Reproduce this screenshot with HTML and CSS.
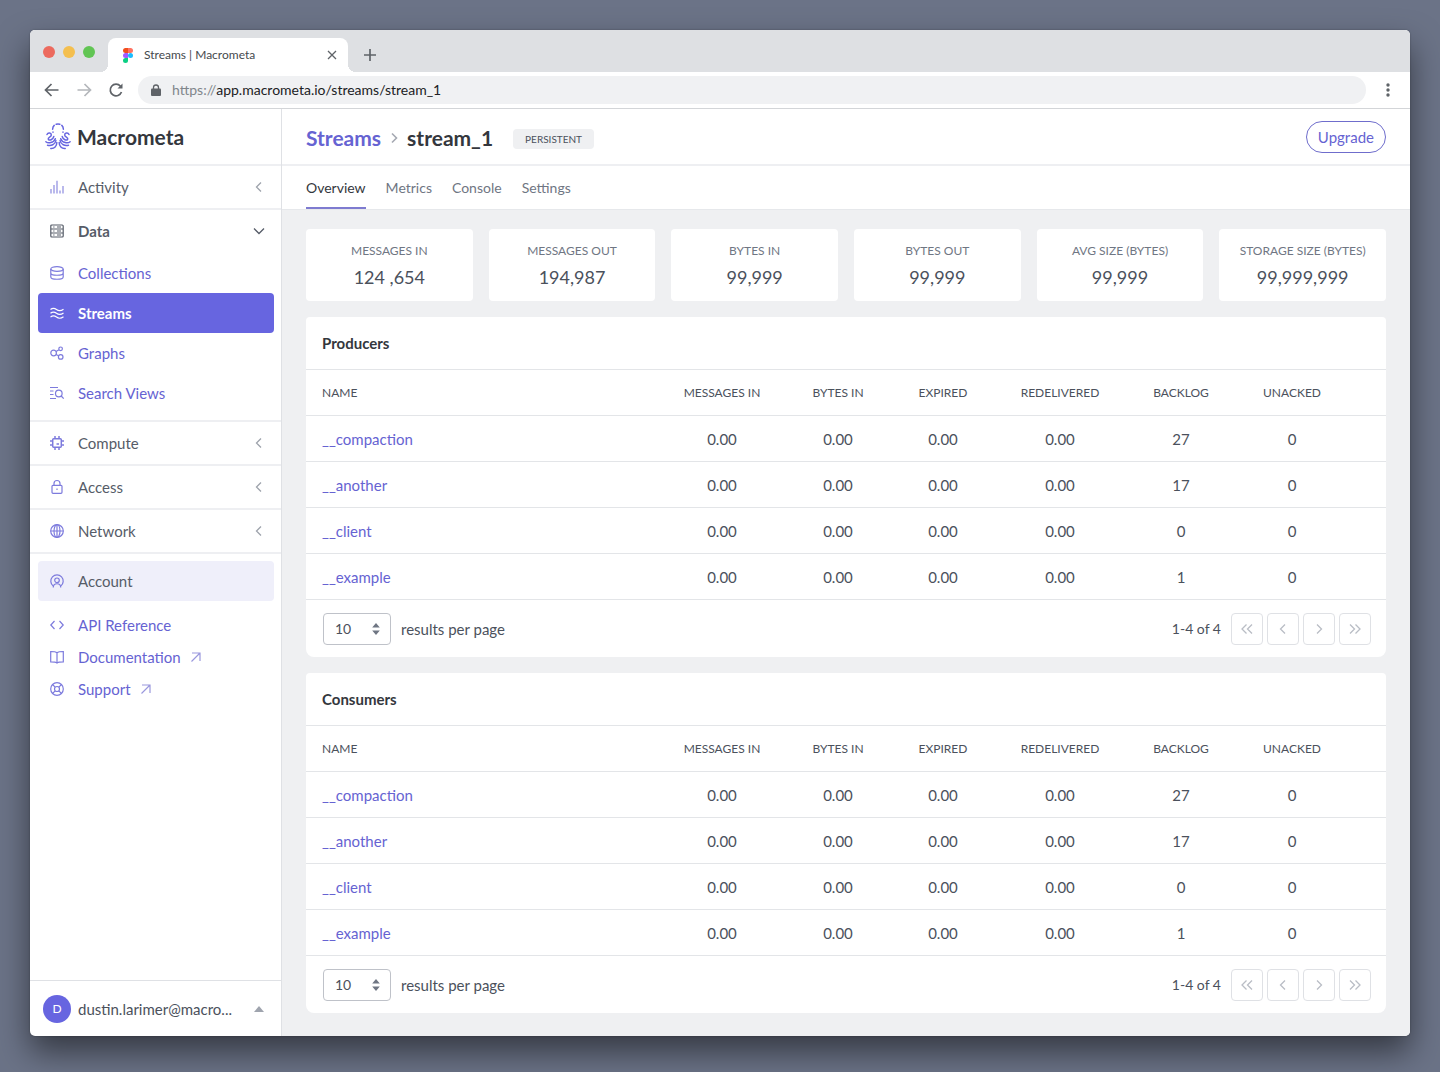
FILE: index.html
```html
<!DOCTYPE html>
<html lang="en">
<head>
    <meta charset="UTF-8">
    <meta name="viewport" content="width=device-width, initial-scale=1.0">
    <title>Streams | Macrometa</title>
    <link rel="stylesheet" href="styles.css">
</head>
<body>
    <!-- Shared icons -->
    <svg class="sprite" aria-hidden="true">
        <symbol id="chev-left" viewBox="0 0 14 14"><path d="M9 2.5 4.5 7 9 11.5"/></symbol>
        <symbol id="chev-right" viewBox="0 0 14 14"><path d="M5 2.5 9.5 7 5 11.5"/></symbol>
        <symbol id="chev-first" viewBox="0 0 14 14"><path d="M6.5 2.5 2 7l4.5 4.5M12 2.5 7.5 7l4.5 4.5"/></symbol>
        <symbol id="chev-last" viewBox="0 0 14 14"><path d="M2 2.5 6.5 7 2 11.5M7.5 2.5 12 7l-4.5 4.5"/></symbol>
        <symbol id="external" viewBox="0 0 14 14"><path d="M3 3h8v8M11 3l-8.500 8.500"/></symbol>
        <symbol id="updown" viewBox="0 0 8 14"><path d="M4 1 7.800 5.500H.2zM4 13 .2 8.500h7.600z"/></symbol>
    </svg>

    <div class="window">
        <div class="tab-bar">
            <div class="lights">
                <span class="light red"></span>
                <span class="light yellow"></span>
                <span class="light green"></span>
            </div>
            <div class="browser-tab">
                <svg class="favicon" viewBox="0 0 10 15">
                    <path fill="#f24e1e" d="M2.5 0H5v5H2.500a2.500 2.500 0 0 1 0-5z"/>
                    <path fill="#ff7262" d="M5 0h2.500a2.500 2.500 0 0 1 0 5H5z"/>
                    <path fill="#a259ff" d="M2.500 5H5v5H2.500a2.500 2.500 0 0 1 0-5z"/>
                    <circle fill="#1abcfe" cx="7.5" cy="7.5" r="2.5"/>
                    <path fill="#0acf83" d="M2.500 10H5v2.500A2.500 2.500 0 1 1 2.500 10z"/>
                </svg>
                <span class="tab-title">Streams | Macrometa</span>
                <button class="plain" aria-label="Close tab">
                    <svg class="line" width="10" height="10" viewBox="0 0 10 10"><path d="m1 1 8 8M9 1 1 9"/></svg>
                </button>
            </div>
            <button class="plain new-tab" aria-label="New tab">
                <svg class="line thick" width="12" height="12" viewBox="0 0 12 12"><path d="M6 0v12M0 6h12"/></svg>
            </button>
        </div>

        <div class="toolbar">
            <button class="plain" aria-label="Back">
                <svg class="line thick" width="16" height="16" viewBox="0 0 16 16"><path d="M14.5 8h-13M7.500 2l-6 6 6 6"/></svg>
            </button>
            <button class="plain faded" aria-label="Forward">
                <svg class="line thick" width="16" height="16" viewBox="0 0 16 16"><path d="M1.500 8h13M8.500 2l6 6-6 6"/></svg>
            </button>
            <button class="plain" aria-label="Reload">
                <svg class="line thick" width="16" height="16" viewBox="0 0 16 16"><path d="M13.500 10A5.800 5.800 0 1 1 12.500 4.300"/><path class="solid" d="M14.500 1.500v5h-5z"/></svg>
            </button>
            <div class="address">
                <svg width="10" height="13" viewBox="0 0 10 13"><path fill="#5f6368" d="M1 4.500h8q1 0 1 1V11q0 1-1 1H1q-1 0-1-1V5.500q0-1 1-1z"/><path fill="none" stroke="#5f6368" stroke-width="1.3" d="M2.500 5V3.500a2.500 2.500 0 0 1 5 0V5"/></svg>
                <label class="url"><span>https://</span><input type="text" value="app.macrometa.io/streams/stream_1" aria-label="Address"></label>
            </div>
            <button class="plain more" aria-label="Browser menu">
                <svg width="4" height="14" viewBox="0 0 4 14" fill="#5f6368"><circle cx="2" cy="2" r="1.7"/><circle cx="2" cy="7" r="1.7"/><circle cx="2" cy="12" r="1.7"/></svg>
            </button>
        </div>

        <div class="app">
            <aside class="sidebar">
                <a href="#" class="logo">
                    <svg width="26" height="27" viewBox="0 0 26 27">
                        <path d="M7.600 6.300Q7.800 3.600 9.200 2.400M11.200 1.200Q13 .7 14.800 1.200M16.800 2.400q1.400 1.200 1.600 3.900"/>
                        <path d="M8 9v.2M18 9v.2"/>
                        <path d="M2 11.500C3 9.300 6.300 9.800 6.300 12S2.500 14.200 3.300 16.200 8 16.600 8.800 13.500"/>
                        <path d="M24 11.500C23 9.300 19.700 9.800 19.700 12s3.800 2.200 3 4.200-4.700.4-5.500-2.700"/>
                        <path d="M.9 18.700c2 1.800 7.800 1.500 9.400-3M25.100 18.700c-2 1.800-7.800 1.500-9.400-3"/>
                        <path d="M2.500 22.200c3.500.9 7.700-.5 8.400-4.700M23.500 22.200c-3.500.9-7.700-.5-8.400-4.700"/>
                        <path d="M5.800 25.500c3.600.3 6-2.200 6-6M20.200 25.500c-3.600.3-6-2.200-6-6"/>
                    </svg>
                    <span>Macrometa</span>
                </a>

                <nav>
                    <a href="#" class="nav-section">
                        <svg class="icon light-icon" viewBox="0 0 14 14"><path d="M1 9v4.500M4 5v8.500M7 .8v12.700M10 10.500v3M13 6v7.500"/></svg>
                        <span>Activity</span>
                        <svg class="chev"><use href="#chev-left"/></svg>
                    </a>
                    <div class="nav-group">
                        <a href="#" class="nav-section open">
                            <svg class="icon" viewBox="0 0 14 14"><rect x=".8" y="1" width="12.4" height="12" rx="1"/><path d="M1 5h12M1 9h12M3.200 3h1.300M7 3h4M3.200 7h1.300M7 7h4M3.200 11h1.300M7 11h4"/></svg>
                            <span>Data</span>
                            <svg class="chev" viewBox="0 0 14 14"><path d="M2 4.500 7 9.500l5-5"/></svg>
                        </a>
                        <a href="#" class="nav-item">
                            <svg class="icon" viewBox="0 0 14 14"><ellipse cx="7" cy="3" rx="6.2" ry="2.3"/><path d="M.8 3v8c0 3 12.400 3 12.400 0V3M.8 7c0 3 12.400 3 12.400 0"/></svg>
                            <span>Collections</span>
                        </a>
                        <a href="#" class="nav-item active">
                            <svg class="icon" viewBox="0 0 14 14"><path d="M.5 3.500c2.500-2 4-1.500 6 0s4.500 1.500 7-.3M.5 7.300c2.500-2 4-1.500 6 0s4.500 1.500 7-.3M.5 11.100c2.500-2 4-1.500 6 0s4.500 1.500 7-.3"/></svg>
                            <span>Streams</span>
                        </a>
                        <a href="#" class="nav-item">
                            <svg class="icon" viewBox="0 0 14 14"><circle cx="3.6" cy="7" r="2.8"/><circle cx="10.6" cy="2.8" r="1.8"/><circle cx="10.7" cy="10.9" r="2.3"/><path d="M6 5.500 9 3.700M6 8.400l2.500 1.400"/></svg>
                            <span>Graphs</span>
                        </a>
                        <a href="#" class="nav-item">
                            <svg class="icon" viewBox="0 0 14 14"><path d="M0 1.500h8M0 5h3.500M0 8.500h3.500M0 12.500h6"/><circle cx="8.8" cy="7.5" r="3.3"/><path d="m11.200 10 2.500 2.700"/></svg>
                            <span>Search Views</span>
                        </a>
                    </div>
                    <a href="#" class="nav-section">
                        <svg class="icon" viewBox="0 0 14 14"><rect x="2.7" y="2.7" width="8.6" height="8.6" rx="1" stroke-width="1.5"/><path stroke-width="1.5" d="M5 0v2.500M9 0v2.500M5 11.500V14M9 11.500V14M0 5h2.500M0 9h2.500M11.500 5H14M11.500 9H14M6.500 8H9"/></svg>
                        <span>Compute</span>
                        <svg class="chev"><use href="#chev-left"/></svg>
                    </a>
                    <a href="#" class="nav-section">
                        <svg class="icon" viewBox="0 0 14 14"><rect x="2" y="5.3" width="10" height="8" rx="1"/><path d="M4 5V3.500a3 3 0 0 1 6 0V5M7 8.600v1.400"/></svg>
                        <span>Access</span>
                        <svg class="chev"><use href="#chev-left"/></svg>
                    </a>
                    <a href="#" class="nav-section">
                        <svg class="icon" viewBox="0 0 14 14"><circle cx="7" cy="7" r="6.3"/><ellipse cx="7" cy="7" rx="3" ry="6.3"/><path d="M.7 7h12.600M7 .7v12.600"/></svg>
                        <span>Network</span>
                        <svg class="chev"><use href="#chev-left"/></svg>
                    </a>
                </nav>

                <a href="#" class="nav-item account">
                    <svg class="icon" viewBox="0 0 14 14"><path d="M3.200 12A6.200 6.200 0 1 1 10.800 12"/><circle cx="7" cy="6.3" r="2.3"/><path d="M3.300 13.500c0-5 7.400-5 7.400 0"/></svg>
                    <span>Account</span>
                </a>

                <div class="help-links">
                    <a href="#">
                        <svg class="icon" viewBox="0 0 14 14"><path d="M4.500 3 .8 7l3.700 4M9.500 3l3.700 4-3.700 4"/></svg>
                        <span>API Reference</span>
                    </a>
                    <a href="#">
                        <svg class="icon" viewBox="0 0 14 14"><path d="M7 2.800Q5.500 1.500.7 1.500v10.300q5 0 6.300 1.200 1.300-1.200 6.300-1.200V1.500Q8.500 1.500 7 2.800zM7 2.800V13"/></svg>
                        <span>Documentation</span>
                        <svg class="external"><use href="#external"/></svg>
                    </a>
                    <a href="#">
                        <svg class="icon" viewBox="0 0 14 14"><circle cx="7" cy="7" r="6.3"/><circle cx="7" cy="7" r="2.5"/><path d="m2.500 2.500 2.700 2.700M11.500 2.500 8.800 5.200M2.500 11.500l2.700-2.700M11.500 11.500 8.800 8.800"/></svg>
                        <span>Support</span>
                        <svg class="external"><use href="#external"/></svg>
                    </a>
                </div>

                <button class="user">
                    <span class="avatar">D</span>
                    <span class="email">dustin.larimer@macro...</span>
                    <svg width="10" height="6" viewBox="0 0 10 6"><path fill="#9fa4ae" d="m5 0 5 6H0z"/></svg>
                </button>
            </aside>

            <main>
                <header class="page-header">
                    <h1>
                        <a href="#">Streams</a>
                        <svg class="crumb"><use href="#chev-right"/></svg>
                        <span>stream_1</span>
                    </h1>
                    <span class="badge">PERSISTENT</span>
                    <button class="upgrade">Upgrade</button>
                </header>

                <nav class="tabs">
                    <a href="#" class="current">Overview</a>
                    <a href="#">Metrics</a>
                    <a href="#">Console</a>
                    <a href="#">Settings</a>
                </nav>

                <div class="content">
                    <div class="stats">
                        <div class="stat"><h3>MESSAGES IN</h3><p>124 ,654</p></div>
                        <div class="stat"><h3>MESSAGES OUT</h3><p>194,987</p></div>
                        <div class="stat"><h3>BYTES IN</h3><p>99,999</p></div>
                        <div class="stat"><h3>BYTES OUT</h3><p>99,999</p></div>
                        <div class="stat"><h3>AVG SIZE (BYTES)</h3><p>99,999</p></div>
                        <div class="stat"><h3>STORAGE SIZE (BYTES)</h3><p>99,999,999</p></div>
                    </div>

                    <!-- Producers -->
                    <section class="panel">
                        <h2>Producers</h2>
                        <table>
                            <thead>
                                <tr><th class="name">NAME</th><th class="wide">MESSAGES IN</th><th class="wide">BYTES IN</th><th class="narrow">EXPIRED</th><th class="widest">REDELIVERED</th><th class="medium">BACKLOG</th><th class="last">UNACKED</th></tr>
                            </thead>
                            <tbody>
                                <tr><td><a href="#">__compaction</a></td><td>0.00</td><td>0.00</td><td>0.00</td><td>0.00</td><td>27</td><td>0</td></tr>
                                <tr><td><a href="#">__another</a></td><td>0.00</td><td>0.00</td><td>0.00</td><td>0.00</td><td>17</td><td>0</td></tr>
                                <tr><td><a href="#">__client</a></td><td>0.00</td><td>0.00</td><td>0.00</td><td>0.00</td><td>0</td><td>0</td></tr>
                                <tr><td><a href="#">__example</a></td><td>0.00</td><td>0.00</td><td>0.00</td><td>0.00</td><td>1</td><td>0</td></tr>
                            </tbody>
                        </table>
                        <div class="pager">
                            <div class="select">
                                <select id="producers-size"><option>10</option><option>25</option><option>50</option></select>
                                <svg><use href="#updown"/></svg>
                            </div>
                            <label for="producers-size">results per page</label>
                            <span class="range">1-4 of 4</span>
                            <button aria-label="First page"><svg><use href="#chev-first"/></svg></button>
                            <button aria-label="Previous page"><svg><use href="#chev-left"/></svg></button>
                            <button aria-label="Next page"><svg><use href="#chev-right"/></svg></button>
                            <button aria-label="Last page"><svg><use href="#chev-last"/></svg></button>
                        </div>
                    </section>

                    <!-- Consumers -->
                    <section class="panel">
                        <h2>Consumers</h2>
                        <table>
                            <thead>
                                <tr><th class="name">NAME</th><th class="wide">MESSAGES IN</th><th class="wide">BYTES IN</th><th class="narrow">EXPIRED</th><th class="widest">REDELIVERED</th><th class="medium">BACKLOG</th><th class="last">UNACKED</th></tr>
                            </thead>
                            <tbody>
                                <tr><td><a href="#">__compaction</a></td><td>0.00</td><td>0.00</td><td>0.00</td><td>0.00</td><td>27</td><td>0</td></tr>
                                <tr><td><a href="#">__another</a></td><td>0.00</td><td>0.00</td><td>0.00</td><td>0.00</td><td>17</td><td>0</td></tr>
                                <tr><td><a href="#">__client</a></td><td>0.00</td><td>0.00</td><td>0.00</td><td>0.00</td><td>0</td><td>0</td></tr>
                                <tr><td><a href="#">__example</a></td><td>0.00</td><td>0.00</td><td>0.00</td><td>0.00</td><td>1</td><td>0</td></tr>
                            </tbody>
                        </table>
                        <div class="pager">
                            <div class="select">
                                <select id="consumers-size"><option>10</option><option>25</option><option>50</option></select>
                                <svg><use href="#updown"/></svg>
                            </div>
                            <label for="consumers-size">results per page</label>
                            <span class="range">1-4 of 4</span>
                            <button aria-label="First page"><svg><use href="#chev-first"/></svg></button>
                            <button aria-label="Previous page"><svg><use href="#chev-left"/></svg></button>
                            <button aria-label="Next page"><svg><use href="#chev-right"/></svg></button>
                            <button aria-label="Last page"><svg><use href="#chev-last"/></svg></button>
                        </div>
                    </section>
                </div>
            </main>
        </div>
    </div>
</body>
</html>
```

FILE: styles.css
```css
* {
    box-sizing: border-box;
}

body {
    display: flex;
    min-height: 100vh;
    margin: 0;
    padding: 30px 30px 36px;
    background: #6b7387;
    color: #4b515c;
    font-family: Lato, "Liberation Sans", sans-serif;
    font-size: 15px;
    line-height: 20px;
}

a {
    color: #6663d2;
    text-decoration: none;
}

button, input, select {
    font: inherit;
    color: inherit;
}

button {
    cursor: pointer;
}

svg {
    flex: none;
}

.sprite {
    position: absolute;
    width: 0;
    height: 0;
}

.plain {
    display: flex;
    padding: 0;
    border: none;
    background: none;
    color: #5f6368;
}

.line {
    fill: none;
    stroke: currentColor;
    stroke-width: 1.3;
}

.thick {
    stroke-width: 1.7;
}

.solid {
    fill: currentColor;
    stroke: none;
}

.faded {
    color: #b4b7bb;
}

/* Browser window */
.window {
    display: flex;
    flex-direction: column;
    flex: 1;
    min-width: 0;
    border-radius: 5px;
    overflow: hidden;
    background: #fff;
    box-shadow: 0 0 2px rgba(0, 0, 0, 0.3), 0 16px 32px rgba(0, 0, 0, 0.5);
}

.tab-bar {
    display: flex;
    height: 42px;
    padding: 8px 13px 0;
    background: #dee0e3;
}

.lights {
    display: flex;
    gap: 8px;
    margin: 8px 13px 0 0;
}

.light {
    width: 12px;
    height: 12px;
    border-radius: 50%;
}

.red { background: #ec6a5e; }
.yellow { background: #f4bf4f; }
.green { background: #61c554; }

.browser-tab {
    position: relative;
    display: flex;
    align-items: center;
    width: 240px;
    padding: 0 11px 0 15px;
    border-radius: 8px 8px 0 0;
    background: #fff;
    color: #45494d;
    font-size: 12px;
}

/* Curved feet on both sides of the tab */
.browser-tab::before,
.browser-tab::after {
    content: "";
    position: absolute;
    bottom: 0;
    width: 8px;
    height: 8px;
}

.browser-tab::before {
    left: -8px;
    background: radial-gradient(circle at 0 0, transparent 8px, #fff 8px);
}

.browser-tab::after {
    right: -8px;
    background: radial-gradient(circle at 100% 0, transparent 8px, #fff 8px);
}

.favicon {
    width: 10px;
    height: 15px;
}

.tab-title {
    flex: 1;
    margin-left: 11px;
}

.new-tab {
    align-items: center;
    margin-left: 16px;
}

.toolbar {
    display: flex;
    align-items: center;
    gap: 16px;
    height: 37px;
    padding: 0 20px 0 14px;
    border-bottom: 1px solid #d3d5d8;
}

.address {
    display: flex;
    align-items: center;
    flex: 1;
    gap: 11px;
    height: 28px;
    margin-right: 4px;
    margin-left: -2px;
    padding: 0 13px;
    border-radius: 14px;
    background: #f0f1f3;
    font-size: 14px;
}

.url {
    display: flex;
    flex: 1;
    color: #80868b;
}

.url input {
    flex: 1;
    padding: 0;
    border: none;
    outline: none;
    background: none;
    color: #202124;
}

.app {
    display: flex;
    flex: 1;
}

/* Sidebar */
.sidebar {
    display: flex;
    flex-direction: column;
    flex: none;
    width: 252px;
    border-right: 1px solid #dfe1e5;
}

.logo {
    display: flex;
    align-items: center;
    gap: 6px;
    height: 57px;
    padding: 0 15px;
    border-bottom: 2px solid #eeeff2;
    color: #34373d;
    font-size: 21px;
    font-weight: 700;
}

.logo svg {
    fill: none;
    stroke: #6765e0;
    stroke-width: 1.5;
    stroke-linecap: round;
}

.icon {
    width: 14px;
    height: 14px;
    overflow: visible;
    fill: none;
    stroke: #7d7bdd;
    stroke-width: 1.2;
}

.light-icon {
    stroke: #a9a8e8;
    stroke-width: 1.6;
}

.nav-section {
    display: flex;
    align-items: center;
    gap: 14px;
    height: 44px;
    padding: 0 15px 0 20px;
    border-bottom: 2px solid #eeeff2;
    color: #565c68;
}

.nav-section span {
    flex: 1;
}

.nav-section.open {
    border-color: transparent;
    font-weight: 700;
}

.nav-section.open svg {
    stroke: #565c68;
}

.chev {
    width: 14px;
    height: 14px;
    fill: none;
    stroke: #9ea3ac;
    stroke-width: 1.3;
}

.nav-group {
    padding-bottom: 7px;
    border-bottom: 2px solid #eeeff2;
}

.nav-group .nav-section {
    height: 43px;
}

.nav-item {
    display: flex;
    align-items: center;
    gap: 14px;
    height: 40px;
    margin: 0 7px 0 8px;
    padding: 0 12px;
    border-radius: 4px;
}

.nav-item.active {
    background: #6765e0;
    color: #fff;
    font-weight: 700;
}

.nav-item.active .icon {
    stroke: #fff;
}

.account {
    margin-top: 7px;
    background: #efeffa;
    color: #565c68;
}

.help-links {
    margin: 8px 20px;
}

.help-links a {
    display: flex;
    align-items: center;
    gap: 14px;
    height: 32px;
}

.external {
    width: 14px;
    height: 14px;
    margin-left: -6px;
    fill: none;
    stroke: #9a98dd;
    stroke-width: 1.2;
}

.user {
    display: flex;
    align-items: center;
    height: 56px;
    margin-top: auto;
    padding: 0 17px 0 13px;
    border: none;
    border-top: 1px solid #dfe1e5;
    background: none;
    text-align: left;
}

.avatar {
    width: 28px;
    margin-right: 7px;
    border-radius: 50%;
    background: #6765e0;
    color: #fff;
    font-size: 12px;
    line-height: 28px;
    text-align: center;
}

.email {
    flex: 1;
}

/* Main area */
main {
    flex: 1;
    min-width: 0;
    background: #eff0f2;
}

.page-header {
    display: flex;
    align-items: center;
    height: 57px;
    padding: 0 24px;
    border-bottom: 2px solid #eeeff2;
    background: #fff;
}

h1 {
    display: flex;
    align-items: center;
    gap: 6px;
    margin: 2px 0 0;
    color: #34373d;
    font-size: 21px;
    font-weight: 700;
    line-height: 28px;
}

.crumb {
    width: 14px;
    height: 14px;
    fill: none;
    stroke: #a5a9b2;
    stroke-width: 1.6;
}

.badge {
    margin: 4px 0 0 20px;
    padding: 0 12px;
    border-radius: 4px;
    background: #eff0f2;
    font-size: 10px;
}

.upgrade {
    height: 32px;
    margin-left: auto;
    padding: 0 11px;
    border: 1px solid #6f6dcc;
    border-radius: 16px;
    background: #fff;
    color: #6663d2;
}

.tabs {
    display: flex;
    gap: 20px;
    height: 44px;
    padding: 0 24px;
    border-bottom: 1px solid #e6e8eb;
    background: #fff;
    font-size: 14px;
}

.tabs a {
    height: 43px;
    color: #6f7683;
    line-height: 43px;
}

.tabs .current {
    border-bottom: 2px solid #7e7bd0;
    color: #34373d;
}

.content {
    display: flex;
    flex-direction: column;
    gap: 16px;
    padding: 19px 24px 23px;
}

.stats {
    display: grid;
    grid-template-columns: repeat(6, 1fr);
    gap: 16px;
}

.stat {
    padding: 12px 0;
    border-radius: 4px;
    background: #fff;
    text-align: center;
    white-space: nowrap;
}

.stat h3 {
    margin: 0;
    color: #6f7683;
    font-size: 12px;
    font-weight: 400;
}

.stat p {
    margin: 4px 0 0;
    font-size: 18px;
    line-height: 24px;
}

.panel {
    border-radius: 4px 4px 8px 8px;
    background: #fff;
}

.panel h2 {
    margin: 0;
    padding: 16px;
    color: #34373d;
    font-size: 15px;
    font-weight: 700;
}

table {
    width: 100%;
    border-collapse: separate;
    border-spacing: 0;
    table-layout: fixed;
}

th, td {
    height: 46px;
    padding: 0;
    border-top: 1px solid #e3e5e8;
    text-align: center;
}

tr:last-child td {
    height: 47px;
    border-bottom: 1px solid #e3e5e8;
}

th {
    font-size: 12px;
    font-weight: 400;
}

.wide { width: 116px; }
.narrow { width: 94px; }
.widest { width: 140px; }
.medium { width: 102px; }
.last { width: 154px; }

th:first-child,
td:first-child {
    padding-left: 16px;
    text-align: left;
}

th:last-child,
td:last-child {
    padding-right: 34px;
}

.pager {
    display: flex;
    align-items: center;
    gap: 4px;
    padding: 13px 15px 12px 17px;
}

.select {
    position: relative;
    width: 68px;
    margin-right: 6px;
}

.select select {
    width: 100%;
    height: 32px;
    padding: 0 11px;
    border: 1px solid #bfc2c9;
    border-radius: 4px;
    background: #fff;
    font-size: 14px;
    appearance: none;
}

.select svg {
    position: absolute;
    top: 9px;
    right: 11px;
    width: 8px;
    height: 14px;
    fill: #6f7683;
    pointer-events: none;
}

.range {
    margin: 0 6px 0 auto;
    font-size: 14px;
}

.pager button {
    display: flex;
    align-items: center;
    justify-content: center;
    width: 32px;
    height: 32px;
    padding: 0;
    border: 1px solid #dfe1e5;
    border-radius: 4px;
    background: #fff;
}

.pager button svg {
    width: 14px;
    height: 14px;
    fill: none;
    stroke: #b9bdc5;
    stroke-width: 1.3;
}
```
